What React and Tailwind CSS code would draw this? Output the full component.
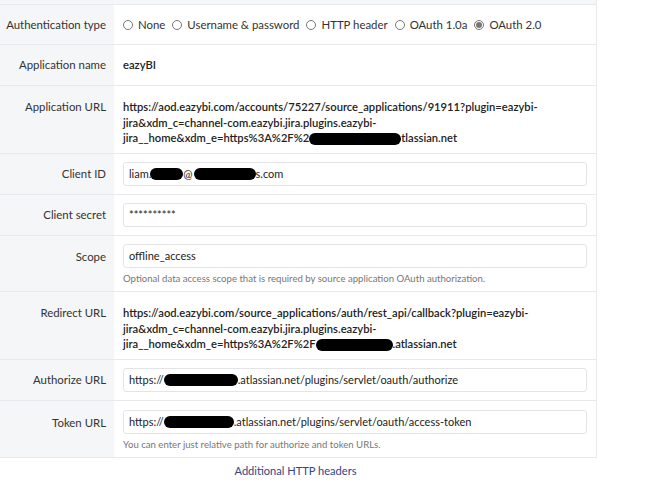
const font = { fontFamily: 'Lato, "Noto Sans", sans-serif' };

function Redact({ w, className = "" }) {
  return <span className={`inline-block h-[12px] align-middle rounded-full bg-black ${className}`} style={{ width: w }} />;
}

function Row({ label, labelPad = "pt-[13px]", top, children, className = "" }) {
  return (
    <div className={`flex border-b border-[#e8e9ec] ${className}`}>
      <div className={`w-[114px] shrink-0 bg-[#f5f6f8] pr-2 text-right text-[#333] whitespace-nowrap flex justify-end ${top ? `items-start ${labelPad}` : "items-center"}`}>
        {label}
      </div>
      <div className="flex-1 bg-white px-[9px] whitespace-nowrap">{children}</div>
    </div>
  );
}

function Input({ children }) {
  return (
    <div className="h-[24px] rounded-[3px] border border-[#e3e4e7] px-[5px] flex items-center text-[11px] text-[#222] whitespace-nowrap">
      {children}
    </div>
  );
}

function Radio({ label, checked }) {
  return (
    <span className="inline-flex items-center gap-[5px] mr-[7px]">
      <span className="w-[10px] h-[10px] rounded-full border border-[#777] flex items-center justify-center">
        {checked && <span className="w-[6px] h-[6px] rounded-full bg-[#777]" />}
      </span>
      {label}
    </span>
  );
}

export default function App() {
  return (
    <div className="w-[648px] h-[500px] bg-white text-[11.4px] leading-[15.5px]" style={font}>
      <div className="w-[597px] border-r border-[#e8e9ec]">
        <div className="h-[5px] bg-[#f5f6f8] border-b border-[#e8e9ec]" />
        <Row label="Authentication type" className="h-[40px]">
          <div className="h-full flex items-center text-[#333]">
            <Radio label="None" />
            <Radio label="Username & password" />
            <Radio label="HTTP header" />
            <Radio label="OAuth 1.0a" />
            <Radio label="OAuth 2.0" checked />
          </div>
        </Row>
        <Row label="Application name" className="h-[41px]">
          <div className="h-full flex items-center font-semibold text-[11.2px] text-[#222]">eazyBI</div>
        </Row>
        <Row label="Application URL" top className="h-[68px]">
          <div className="pt-[13px] font-semibold text-[11.2px] text-[#222]">
            https://aod.eazybi.com/accounts/75227/source_applications/91911?plugin=eazybi-
            <br />
            jira&amp;xdm_c=channel-com.eazybi.jira.plugins.eazybi-
            <br />
            jira__home&amp;xdm_e=https%3A%2F%2<Redact w={92} />tlassian.net
          </div>
        </Row>
        <Row label="Client ID" className="h-[41px]">
          <div className="h-full flex flex-col justify-center">
            <Input>
              liam.<Redact w={33} className="-ml-[1px]" />@<Redact w={62} className="ml-[1px]" />s.com
            </Input>
          </div>
        </Row>
        <Row label="Client secret" className="h-[41px]">
          <div className="h-full flex flex-col justify-center">
            <Input>**********</Input>
          </div>
        </Row>
        <Row label="Scope" top labelPad="pt-[13px]" className="h-[56px]">
          <div className="pt-[8px]">
            <Input>offline_access</Input>
            <div className="mt-[4px] text-[9.6px] leading-[13px] text-[#777]">
              Optional data access scope that is required by source application OAuth authorization.
            </div>
          </div>
        </Row>
        <Row label="Redirect URL" top className="h-[68px]">
          <div className="pt-[13px] font-semibold text-[11.2px] text-[#222]">
            https://aod.eazybi.com/source_applications/auth/rest_api/callback?plugin=eazybi-
            <br />
            jira&amp;xdm_c=channel-com.eazybi.jira.plugins.eazybi-
            <br />
            jira__home&amp;xdm_e=https%3A%2F%2F<Redact w={77} />.atlassian.net
          </div>
        </Row>
        <Row label="Authorize URL" className="h-[41px]">
          <div className="h-full flex flex-col justify-center">
            <Input>
              https://<Redact w={74} />.atlassian.net/plugins/servlet/oauth/authorize
            </Input>
          </div>
        </Row>
        <Row label="Token URL" top labelPad="pt-[14px]" className="h-[57px]">
          <div className="pt-[9px]">
            <Input>
              https://<Redact w={70} />.atlassian.net/plugins/servlet/oauth/access-token
            </Input>
            <div className="mt-[4px] text-[9.6px] leading-[13px] text-[#777]">
              You can enter just relative path for authorize and token URLs.
            </div>
          </div>
        </Row>
      </div>
      <div className="w-[597px] pt-[5px] pr-[6px] text-center text-[11.1px] text-[#2f4687]">Additional HTTP headers</div>
    </div>
  );
}
